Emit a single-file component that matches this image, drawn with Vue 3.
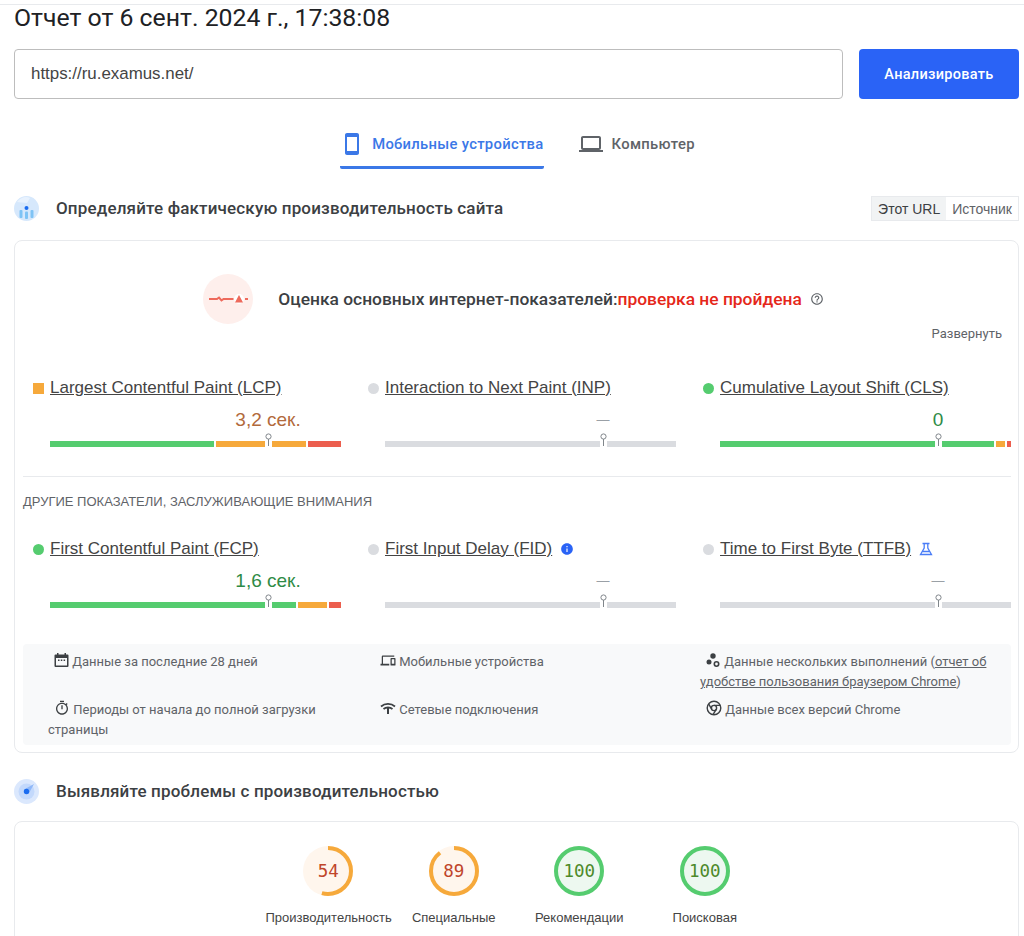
<template>
  <div class="page">
    <div class="topline"></div>
    <h1 class="title">Отчет от 6 сент. 2024 г., 17:38:08</h1>

    <form class="search" @submit.prevent>
      <input class="url" value="https://ru.examus.net/" />
      <button class="go">Анализировать</button>
    </form>

    <div class="tabs">
      <div class="tab active">
        <svg width="24" height="24" viewBox="0 0 24 24"><path fill="#3b78e7" d="M17 1.010L7 1c-1.100 0-2 .9-2 2v18c0 1.100.9 2 2 2h10c1.100 0 2-.9 2-2V3c0-1.100-.9-1.990-2-1.990zM17 19H7V5h10v14z" /></svg>
        <span>Мобильные устройства</span>
      </div>
      <div class="tab">
        <svg width="24" height="24" viewBox="0 0 24 24"><path fill="#5f6368" d="M20 18c1.100 0 1.990-.9 1.990-2L22 6c0-1.100-.9-2-2-2H4c-1.100 0-2 .9-2 2v10c0 1.100.9 2 2 2H0v2h24v-2h-4zM4 6h16v10H4V6z" /></svg>
        <span>Компьютер</span>
      </div>
    </div>

    <div class="section-head first">
      <svg width="25" height="25" viewBox="0 0 25 25">
        <circle cx="12.500" cy="12.500" r="12.500" fill="#d6e8fc" />
        <path fill="#e8f2fe" d="M3 6c4-5 9-6 13-4l-3 5z" />
        <circle cx="12.500" cy="12" r="2" fill="#1a6cf0" />
        <rect x="5.500" y="14" width="3" height="8" rx="1" fill="#7ec3f5" />
        <rect x="11" y="15.500" width="3" height="7.500" rx="1" fill="#7ec3f5" />
        <rect x="16.500" y="14" width="3" height="8" rx="1" fill="#7ec3f5" />
      </svg>
      <h2>Определяйте фактическую производительность сайта</h2>
      <div class="switch">
        <span class="on">Этот URL</span>
        <span>Источник</span>
      </div>
    </div>

    <section class="card vitals">
      <div class="verdict">
        <svg width="50" height="50" viewBox="0 0 50 50">
          <circle cx="25" cy="25" r="25" fill="#feefec" />
          <path fill="none" stroke="#ee6a5c" stroke-width="2" d="M6 25h8l2-1.500 2.500 3 2-1.500h10" />
          <circle cx="36" cy="25" r="5" fill="#fff" />
          <path fill="#ee6a5c" d="M36 21l4 7.500h-8z" />
          <rect x="42" y="24" width="3" height="2" fill="#ee6a5c" />
        </svg>
        <p class="verdict-text">Оценка основных интернет-показателей:<span class="failed">проверка не пройдена</span></p>
        <svg class="help" width="14" height="14" viewBox="0 0 24 24"><path fill="#5f6368" d="M11 18h2v-2h-2v2zm1-16C6.480 2 2 6.480 2 12s4.480 10 10 10 10-4.480 10-10S17.520 2 12 2zm0 18c-4.410 0-8-3.590-8-8s3.590-8 8-8 8 3.590 8 8-3.590 8-8 8zm0-14c-2.210 0-4 1.790-4 4h2c0-1.100.9-2 2-2s2 .9 2 2c0 2-3 1.750-3 5h2c0-2.250 3-2.500 3-5 0-2.210-1.790-4-4-4z" /></svg>
      </div>
      <div class="expand">Развернуть</div>

      <div class="metrics">
        <div v-for="m in coreMetrics" :key="m.name" class="metric">
          <div class="metric-head">
            <i :class="['mark', m.mark]"></i>
            <a class="metric-name">{{ m.name }}</a>
          </div>
          <div :class="['value', m.tone]">{{ m.value }}</div>
          <div class="bar">
            <b v-for="(s, i) in m.bar" :key="i" :class="s[0]" :style="{ width: s[1] + 'px' }"></b>
            <svg class="pin" width="7" height="15" viewBox="0 0 7 15">
              <rect x="0" y="7" width="7" height="8" fill="#fff" />
              <circle cx="3.500" cy="3.500" r="2.600" fill="#fff" stroke="#80868b" />
              <rect x="3" y="6" width="1" height="7" fill="#80868b" />
            </svg>
          </div>
        </div>
      </div>

      <div class="divider"></div>
      <div class="other">ДРУГИЕ ПОКАЗАТЕЛИ, ЗАСЛУЖИВАЮЩИЕ ВНИМАНИЯ</div>

      <div class="metrics">
        <div v-for="m in otherMetrics" :key="m.name" class="metric">
          <div class="metric-head">
            <i :class="['mark', m.mark]"></i>
            <a class="metric-name">{{ m.name }}</a>
            <svg v-if="m.info" class="after" width="14" height="14" viewBox="0 0 24 24"><path fill="#2a63f6" d="M12 2C6.480 2 2 6.480 2 12s4.480 10 10 10 10-4.480 10-10S17.520 2 12 2zm1 15h-2v-6h2v6zm0-8h-2V7h2v2z" /></svg>
            <svg v-if="m.lab" class="after" width="14" height="14" viewBox="0 0 14 14"><path fill="none" stroke="#4a7df7" stroke-width="1.300" d="M3.500 1.500h7M5.200 1.500v4.500L1.500 12.500h11L8.800 6V1.500M3.500 9.500h7" /></svg>
          </div>
          <div :class="['value', m.tone]">{{ m.value }}</div>
          <div class="bar">
            <b v-for="(s, i) in m.bar" :key="i" :class="s[0]" :style="{ width: s[1] + 'px' }"></b>
            <svg class="pin" width="7" height="15" viewBox="0 0 7 15">
              <rect x="0" y="7" width="7" height="8" fill="#fff" />
              <circle cx="3.500" cy="3.500" r="2.600" fill="#fff" stroke="#80868b" />
              <rect x="3" y="6" width="1" height="7" fill="#80868b" />
            </svg>
          </div>
        </div>
      </div>

      <div class="notes">
        <div class="note">
          <svg width="15" height="15" viewBox="0 0 15 15"><path fill="#3c4043" d="M3 0h1.500v1.500h6V0H12v1.500h1.500a1 1 0 0 1 1 1V13a1 1 0 0 1-1 1h-12a1 1 0 0 1-1-1V2.500a1 1 0 0 1 1-1H3zM2 5v7.500h11V5zm2 1.500h1.500V8H4zm2.800 0h1.500V8H6.800zm2.800 0h1.500V8H9.600z" /></svg>
          Данные за последние 28 дней
        </div>
        <div class="note">
          <svg width="16" height="15" viewBox="0 0 24 24"><path fill="#3c4043" d="M4 6h18V4H4c-1.100 0-2 .9-2 2v11H0v3h14v-3H4V6zm19 2h-6c-.55 0-1 .45-1 1v10c0 .55.45 1 1 1h6c.55 0 1-.45 1-1V9c0-.55-.45-1-1-1zm-1 9h-4v-7h4v7z" /></svg>
          Мобильные устройства
        </div>
        <div class="note">
          <svg width="15" height="15" viewBox="0 0 15 15"><circle cx="7" cy="3" r="2.700" fill="#3c4043" /><circle cx="3" cy="9" r="2.500" fill="#3c4043" /><circle cx="10.500" cy="11" r="2.200" fill="none" stroke="#3c4043" stroke-width="1.600" /></svg>
          Данные нескольких выполнений (<a class="link">отчет об удобстве пользования браузером Chrome</a>)
        </div>
        <div class="note">
          <svg width="16" height="16" viewBox="0 0 24 24"><path fill="#3c4043" d="M15 1H9v2h6V1zm-4 13h2V8h-2v6zm8.030-6.610l1.420-1.420c-.43-.51-.9-.99-1.410-1.410l-1.420 1.420C16.070 4.740 14.120 4 12 4c-4.970 0-9 4.030-9 9s4.020 9 9 9 9-4.030 9-9c0-2.120-.74-4.070-1.970-5.610zM12 20c-3.870 0-7-3.130-7-7s3.130-7 7-7 7 3.130 7 7-3.130 7-7 7z" /></svg>
          Периоды от начала до полной загрузки страницы
        </div>
        <div class="note">
          <svg width="16" height="15" viewBox="0 0 16 15"><path fill="none" stroke="#3c4043" stroke-width="1.800" d="M1 5.500c4-3.500 10-3.500 14 0M3.500 8c2.500-2 6.500-2 9 0" /><path fill="#3c4043" d="M7 6h2v7H7z" /></svg>
          Сетевые подключения
        </div>
        <div class="note">
          <svg width="16" height="16" viewBox="0 0 16 16"><g fill="none" stroke="#3c4043" stroke-width="1.400"><circle cx="8" cy="8" r="6.800" /><circle cx="8" cy="8" r="2.600" /><path d="M8 5.400h6.200M5.800 9.300L2.600 3.900M10.200 9.300L7 14.700" /></g></svg>
          Данные всех версий Chrome
        </div>
      </div>
    </section>

    <div class="section-head second">
      <svg width="25" height="25" viewBox="0 0 25 25">
        <circle cx="12.500" cy="12.500" r="12.500" fill="#dbe8fd" />
        <circle cx="12.500" cy="12.500" r="8" fill="#c3d9fc" />
        <path fill="#8fb8f9" d="M10 10.500L20 5l-5.500 10z" />
        <circle cx="12.500" cy="12.500" r="2.700" fill="#1a6cf0" />
      </svg>
      <h2>Выявляйте проблемы с производительностью</h2>
    </div>

    <section class="card scores">
      <div v-for="g in gauges" :key="g.label" class="gauge">
        <div class="dial">
          <svg width="50" height="50" viewBox="0 0 50 50">
            <circle cx="25" cy="25" r="25" :fill="g.score < 90 ? '#fff6ed' : '#edf8f0'" />
            <circle
              class="arc"
              cx="25"
              cy="25"
              r="23"
              :stroke="g.score < 90 ? '#f6a93b' : '#55cc6f'"
              :stroke-dasharray="(g.score / 100) * 144.5 + ' 145'"
            />
          </svg>
          <span :class="g.score < 90 ? 'num-mid' : 'num-good'">{{ g.score }}</span>
        </div>
        <div class="gauge-label">{{ g.label }}</div>
      </div>
    </section>
  </div>
</template>

<script setup>
const empty = [["none", 291]];

const coreMetrics = [
  {
    name: "Largest Contentful Paint (LCP)",
    mark: "square",
    tone: "mid",
    value: "3,2 сек.",
    bar: [["good", 164], ["warn", 90], ["poor", 33]],
  },
  {
    name: "Interaction to Next Paint (INP)",
    mark: "grey",
    tone: "dash",
    value: "—",
    bar: empty,
  },
  {
    name: "Cumulative Layout Shift (CLS)",
    mark: "green",
    tone: "ok",
    value: "0",
    bar: [["good", 274], ["warn", 9], ["poor", 4]],
  },
];

const otherMetrics = [
  {
    name: "First Contentful Paint (FCP)",
    mark: "green",
    tone: "ok",
    value: "1,6 сек.",
    bar: [["good", 246], ["warn", 29], ["poor", 12]],
  },
  {
    name: "First Input Delay (FID)",
    mark: "grey",
    tone: "dash",
    value: "—",
    bar: empty,
    info: true,
  },
  {
    name: "Time to First Byte (TTFB)",
    mark: "grey",
    tone: "dash",
    value: "—",
    bar: empty,
    lab: true,
  },
];

const gauges = [
  { score: 54, label: "Производительность" },
  { score: 89, label: "Специальные" },
  { score: 100, label: "Рекомендации" },
  { score: 100, label: "Поисковая" },
];
</script>

<style>
html,
body {
  overflow: hidden;
  background: #fff;
}
</style>

<style scoped>
.page {
  height: 936px;
  overflow: hidden;
  padding: 0 5px 0 14px;
  font-family: "Liberation Sans", Arial, sans-serif;
  color: #3c4043;
}
.topline {
  height: 1px;
  margin: 4px -5px 0 -14px;
  background: #e8eaed;
}
.title {
  margin: 0 0 18px;
  font: 400 24.800px/26px Roboto, sans-serif;
  color: #202124;
}
.search {
  display: flex;
  gap: 16px;
}
.url {
  flex: 1;
  height: 50px;
  box-sizing: border-box;
  padding: 0 16px;
  border: 1px solid #bdbdbd;
  border-radius: 4px;
  font: 16.900px "Liberation Sans", sans-serif;
  color: #444;
  outline: none;
}
.go {
  width: 160px;
  height: 50px;
  border: none;
  border-radius: 4px;
  background: #2a63f6;
  color: #fff;
  font: 500 14.500px Roboto, sans-serif;
  letter-spacing: 0.3px;
}
.tabs {
  display: flex;
  justify-content: center;
  gap: 35px;
  margin: 23px 0 0 2px;
}
.tab {
  display: flex;
  align-items: center;
  gap: 9px;
  box-sizing: border-box;
  height: 47px;
  padding-bottom: 3px;
  font: 500 14.800px Roboto, sans-serif;
  letter-spacing: 0.3px;
  color: #5f6368;
}
.tab.active {
  gap: 8px;
  padding: 0;
  border-bottom: 3px solid #3b78e7;
  border-radius: 0 0 2px 2px;
  color: #3b78e7;
}
.section-head {
  display: flex;
  align-items: center;
  height: 25px;
}
.section-head.first {
  margin-top: 27px;
}
.section-head.second {
  margin-top: 26px;
}
.section-head h2 {
  flex: 1;
  margin: 0 0 2px 17px;
  font: 500 17px Roboto, sans-serif;
  letter-spacing: 0.16px;
  color: #3c4043;
}
.switch {
  display: flex;
  height: 25px;
  box-sizing: border-box;
  border: 1px solid #e8eaed;
  font-size: 14px;
  line-height: 24px;
  color: #5f6368;
}
.switch span {
  padding: 0 6px;
}
.switch .on {
  background: #f1f3f4;
  color: #3c4043;
}
.card {
  border: 1px solid #e8eaed;
  border-radius: 8px;
}
.vitals {
  margin-top: 19px;
  height: 513px;
  box-sizing: border-box;
  padding: 33px 7px 0 8px;
}
.verdict {
  display: flex;
  align-items: center;
  justify-content: center;
  padding-right: 7px;
}
.verdict-text {
  margin: 0 0 0 25px;
  font: 500 17.400px Roboto, sans-serif;
  color: #3c4043;
}
.failed {
  color: #e5271a;
}
.help {
  margin-left: 8px;
}
.expand {
  margin-top: 2px;
  padding-right: 9px;
  text-align: right;
  font: 13px/16px Roboto, sans-serif;
  color: #5f6368;
}
.metrics {
  display: grid;
  grid-template-columns: 335px 335px 1fr;
  padding-left: 10px;
  margin-top: 34px;
}
.metric {
  height: 70px;
}
.metric-head {
  display: flex;
  align-items: center;
  gap: 6px;
  height: 24px;
}
.mark {
  width: 11px;
  height: 11px;
  border-radius: 50%;
}
.mark.square {
  border-radius: 0;
  background: #f6a93b;
}
.mark.grey {
  background: #dadce0;
}
.mark.green {
  background: #55cc6f;
}
.metric-name {
  font-size: 17px;
  color: #444;
  text-decoration: underline;
}
.after {
  margin-left: 2px;
}
.value {
  margin: 9px 0 0 162px;
  width: 146px;
  height: 22px;
  text-align: center;
  font-size: 19px;
  line-height: 22px;
}
.mid {
  color: #b26a3c;
}
.ok {
  color: #2e8b46;
}
.dash {
  color: #9aa0a6;
  font-size: 13px;
}
.bar {
  position: relative;
  display: flex;
  gap: 2px;
  width: 291px;
  height: 6px;
  margin: 10px 0 0 17px;
}
.bar b {
  display: block;
  height: 6px;
}
.good {
  background: #55cc6f;
}
.warn {
  background: #f6a93b;
}
.poor {
  background: #ec5e4e;
}
.none {
  background: #dadce0;
}
.pin {
  position: absolute;
  left: 215px;
  top: -8px;
}
.divider {
  height: 1px;
  margin-top: 30px;
  background: #e8eaed;
}
.other {
  margin-top: 17px;
  font-size: 13px;
  line-height: 16px;
  color: #5f6368;
}
.other + .metrics {
  margin-top: 27px;
}
.notes {
  display: grid;
  grid-template-columns: 326px 326px 1fr;
  row-gap: 2px;
  margin-top: 37px;
  height: 101px;
  box-sizing: border-box;
  padding: 8px 12px 0 25px;
  background: #f8f9fa;
  border-radius: 4px;
  font: 13px/20px Roboto, sans-serif;
  color: #5f6368;
}
.note svg {
  margin-left: 6px;
  vertical-align: -2px;
}
.link {
  text-decoration: underline;
}
.scores {
  display: flex;
  justify-content: center;
  margin-top: 17px;
  height: 200px;
  padding-top: 24px;
}
.gauge {
  width: 125.500px;
  text-align: center;
}
.dial {
  position: relative;
  width: 50px;
  height: 50px;
  margin: 0 auto;
}
.dial span {
  position: absolute;
  inset: 0;
  font: 17.500px/50px "DejaVu Sans Mono", monospace;
}
.arc {
  fill: none;
  stroke-width: 4;
  transform: rotate(-90deg);
  transform-origin: 25px 25px;
}
.num-mid {
  color: #c0452a;
}
.num-good {
  color: #4d8a2a;
}
.gauge-label {
  margin-top: 13px;
  font: 13px/18px "Liberation Sans", sans-serif;
  white-space: nowrap;
  color: #444;
}
</style>
